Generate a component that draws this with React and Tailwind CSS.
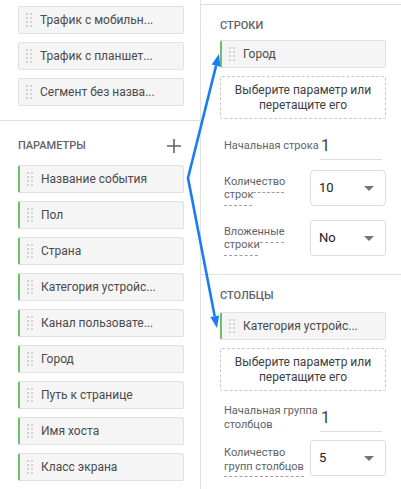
import React from "react";

const segments = ["Трафик с мобильн...", "Трафик с планшет...", "Сегмент без назва..."];
const params = [
  "Название события",
  "Пол",
  "Страна",
  "Категория устройс...",
  "Канал пользовате...",
  "Город",
  "Путь к странице",
  "Имя хоста",
  "Класс экрана",
];

const Handle = () => (
  <div className="grid grid-cols-2 gap-[2px] w-[6px] shrink-0">
    {Array.from({ length: 8 }).map((_, i) => (
      <span key={i} className="block w-[2px] h-[2px] bg-[#d3d3d3]" />
    ))}
  </div>
);

const Chip = ({ label, green }) => (
  <div
    className={`flex items-center h-[28px] bg-[#f5f5f5] border border-[#e0e0e0] rounded-[2px] pl-[7px] gap-[8px] ${
      green ? "border-l-2 border-l-[#6cbf6c]" : ""
    }`}
  >
    <Handle />
    <span className="text-[12px] text-[#4a4a4a] truncate">{label}</span>
  </div>
);

const DropZone = () => (
  <div className="h-[43px] border border-dashed border-[#c8c8c8] rounded-[2px] flex items-center justify-center text-center text-[12px] leading-[15px] text-[#3c4043]">
    Выберите параметр или
    <br />
    перетащите его
  </div>
);

const Caret = () => (
  <svg width="10" height="5" viewBox="0 0 10 5">
    <path d="M0 0h10L5 5z" fill="#757575" />
  </svg>
);

const Select = ({ value }) => (
  <div className="ml-auto shrink-0 w-[76px] h-[36px] border border-[#dadce0] rounded-[4px] flex items-center justify-between pl-[8px] pr-[11px]">
    <span className="text-[13px] text-[#202124]">{value}</span>
    <Caret />
  </div>
);

const NumInput = () => (
  <div className="ml-auto mr-[4px] shrink-0 w-[62px] h-[27px] border-b border-[#dadce0] flex items-center pl-[1px] text-[16px] text-[#3c4043]">
    1
  </div>
);

const DashedLabel = ({ first, second, tail }) => (
  <div className="w-[60px] shrink-0 h-[26px] text-[11px] leading-[13px] text-[#5f6368]">
    <div className="whitespace-nowrap">{first}</div>
    <div className="flex items-start w-[60px]">
      <span className="whitespace-nowrap shrink-0">{second}</span>
      <div className="flex-1 min-w-[20px] mt-[4px] border-b border-dashed border-[#9e9e9e]" />
    </div>
    <div className="mt-[4px] border-b border-dashed border-[#9e9e9e]" style={{ width: tail }} />
  </div>
);

const App = () => {
  return (
    <div className="relative w-[401px] h-[489px] overflow-hidden bg-white flex" style={{ fontFamily: "Roboto, 'Noto Sans', sans-serif" }}>
      {/* left column */}
      <div className="w-[201px] shrink-0 border-r border-[#e0e0e0] flex flex-col">
        <div className="pt-[6px] pb-[14px] pl-[18px] pr-[16px] flex flex-col gap-[8px] border-b border-[#e0e0e0]">
          {segments.map((s) => (
            <Chip key={s} label={s} />
          ))}
        </div>
        <div className="pl-[18px] pr-[16px]">
          <div className="mt-[17px] h-[16px] flex items-center justify-between">
            <span className="text-[11px] font-medium text-[#5f6368]">ПАРАМЕТРЫ</span>
            <svg width="14" height="14" viewBox="0 0 14 14" className="mr-[3px]">
              <path d="M7 0v14M0 7h14" stroke="#5f6368" strokeWidth="1.6" />
            </svg>
          </div>
          <div className="mt-[11px] flex flex-col gap-[8px]">
            {params.map((p) => (
              <Chip key={p} label={p} green />
            ))}
          </div>
        </div>
      </div>

      {/* right column */}
      <div className="flex-1 pt-[4px]">
        <div className="border-t border-[#e0e0e0] pl-[19px] pr-[15px] pb-[18px]">
          <div className="mt-[13px] h-[16px] text-[11px] font-medium text-[#5f6368] flex items-center">СТРОКИ</div>
          <div className="mt-[6px]">
            <Chip label="Город" green />
          </div>
          <div className="mt-[8px]">
            <DropZone />
          </div>
          <div className="mt-[14px] flex items-center pl-[4px]">
            <span className="text-[11px] text-[#5f6368] whitespace-nowrap">Начальная строка</span>
            <NumInput />
          </div>
          <div className="mt-[10px] h-[36px] flex items-center pl-[4px]">
            <DashedLabel first="Количество" second="строк" tail={28} />
            <Select value="10" />
          </div>
          <div className="mt-[14px] h-[36px] flex items-center pl-[4px]">
            <DashedLabel first="Вложенные" second="строки" tail={34} />
            <Select value="No" />
          </div>
        </div>
        <div className="border-t border-[#e0e0e0] pl-[19px] pr-[15px]">
          <div className="mt-[13px] h-[16px] text-[11px] font-medium text-[#5f6368] flex items-center">СТОЛБЦЫ</div>
          <div className="mt-[8px]">
            <Chip label="Категория устройс..." green />
          </div>
          <div className="mt-[8px]">
            <DropZone />
          </div>
          <div className="mt-[13px] h-[28px] flex items-center pl-[4px]">
            <span className="text-[11px] leading-[14px] text-[#5f6368] whitespace-nowrap">
              Начальная группа
              <br />
              столбцов
            </span>
            <NumInput />
          </div>
          <div className="mt-[8px] h-[36px] flex items-start pl-[4px]">
            <div className="mt-[6px] text-[11px] leading-[14px] text-[#5f6368] whitespace-nowrap">
              <div>Количество</div>
              <div className="border-b border-dashed border-[#9e9e9e] pb-[2px]">групп столбцов</div>
            </div>
            <Select value="5" />
          </div>
        </div>
      </div>

      {/* arrows */}
      <svg className="absolute inset-0 pointer-events-none" width="401" height="489" viewBox="0 0 401 489">
        <path d="M216.1 65.6 L188 178 L214.7 316.2" fill="none" stroke="#1a7cf5" strokeWidth="2.6" strokeLinejoin="miter" />
        <path d="M219 54 L220.4 66.7 L211.7 64.5 Z" fill="#1a7cf5" />
        <path d="M217 328 L219.1 315.4 L210.3 317.1 Z" fill="#1a7cf5" />
      </svg>
    </div>
  );
};

export default App;
